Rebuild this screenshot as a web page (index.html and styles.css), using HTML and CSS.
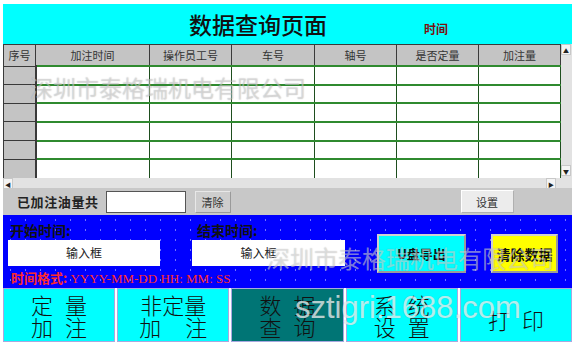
FILE: index.html
```html
<!DOCTYPE html>
<html lang="zh-CN">
<head>
    <meta charset="UTF-8">
    <meta name="viewport" content="width=device-width, initial-scale=1.0">
    <title>数据查询页面</title>
    <link rel="stylesheet" href="styles.css">
</head>
<body>

<div class="panel">
    <div class="header">
        <h1>数据查询页面</h1>
        <span class="clock">时间</span>
    </div>

    <div class="grid-area">
        <div class="grid-main">
            <table class="records">
                <colgroup>
                    <col style="width:32px"><col style="width:114px"><col style="width:82px">
                    <col style="width:83px"><col style="width:82px"><col style="width:82px"><col style="width:82px">
                </colgroup>
                <thead>
                    <tr>
                        <th>序号</th><th>加注时间</th><th>操作员工号</th><th>车号</th><th>轴号</th><th>是否定量</th><th>加注量</th>
                    </tr>
                </thead>
                <tbody>
                    <tr><td class="idx"></td><td></td><td></td><td></td><td></td><td></td><td></td></tr>
                    <tr><td class="idx"></td><td></td><td></td><td></td><td></td><td></td><td></td></tr>
                    <tr><td class="idx"></td><td></td><td></td><td></td><td></td><td></td><td></td></tr>
                    <tr><td class="idx"></td><td></td><td></td><td></td><td></td><td></td><td></td></tr>
                    <tr><td class="idx"></td><td></td><td></td><td></td><td></td><td></td><td></td></tr>
                    <tr><td class="idx"></td><td></td><td></td><td></td><td></td><td></td><td></td></tr>
                </tbody>
            </table>
            <div class="hscroll">
                <span class="arrow">&#9664;</span>
                <span class="arrow">&#9654;</span>
            </div>
        </div>
        <div class="vscroll">
            <span class="arrow">&#9650;</span>
            <span class="arrow">&#9660;</span>
        </div>
    </div>

    <div class="total-bar">
        <span class="total-label">已加注油量共</span>
        <input type="text" class="total-input">
        <button class="btn-gray">清除</button>
        <button class="btn-setup">设置</button>
    </div>

    <div class="query">
        <span class="q-label">开始时间:</span>
        <span class="q-label q-end">结束时间:</span>
        <div class="q-input q-start-box">输入框</div>
        <div class="q-input q-end-box">输入框</div>
        <div class="q-format"><b>时间格式:</b> YYYY-MM-DD HH: MM: SS</div>
        <button class="btn-usb">U盘导出</button>
        <button class="btn-clear">清除数据</button>
    </div>

    <div class="nav">
        <button class="nav-btn"><span>定量</span><span>加注</span></button>
        <button class="nav-btn"><span class="tight">非定量</span><span class="wide">加注</span></button>
        <button class="nav-btn active"><span>数据</span><span>查询</span></button>
        <button class="nav-btn"><span>系统</span><span>设置</span></button>
        <button class="nav-btn single"><span>打印</span></button>
    </div>

    <div class="mark mark-table">深圳市泰格瑞机电有限公司</div>
    <div class="mark mark-query">深圳市泰格瑞机电有限公司</div>
    <div class="mark mark-site">sztigri.1688.com</div>
</div>

</body>
</html>
```

FILE: styles.css
```css
body {
    margin: 0;
    background-color: #ffffff;
    font-family: "Noto Sans CJK SC", "Liberation Sans", sans-serif;
}

.panel {
    position: relative;
    width: 569px;
    margin: 4px 0 0 3px;
    overflow: hidden;
}

/* 标题栏 */
.header {
    height: 40px;
    background-color: #00ffff;
    display: flex;
    align-items: center;
}

.header h1 {
    margin: 0 0 0 186px;
    font-size: 23px;
    font-weight: 500;
    color: #111;
}

.clock {
    margin: 8px 0 0 97px;
    font-size: 12px;
    font-weight: bold;
    color: #7a1010;
}

/* 数据表 */
.grid-area {
    display: flex;
    height: 144px;
    background-color: #e2e2e2;
}

.grid-main {
    width: 557px;
    display: flex;
    flex-direction: column;
}

.records {
    border-collapse: collapse;
    table-layout: fixed;
    width: 557px;
    font-size: 11px;
}

.records th {
    height: 20px;
    padding: 0;
    background-color: #c4c4c4;
    border: 1px solid #3a3a3a;
    font-weight: normal;
    color: #333;
}

.records tbody tr {
    height: 18.67px;
}

.records td {
    padding: 0;
    background-color: #ffffff;
    border-top: 2px solid #2f8a2f;
    border-left: 1px solid #1e4e1e;
    border-right: 1px solid #1e4e1e;
}

.records td.idx {
    background-color: #c4c4c4;
    border-left: 1px solid #3a3a3a;
    border-right: 2px solid #3a3a3a;
    border-top: 1px solid #3a3a3a;
}

.hscroll {
    height: 12px;
    display: flex;
    justify-content: space-between;
    padding-right: 4px;
}

.arrow {
    width: 10px;
    height: 11px;
    background-color: #f4f4f4;
    border: 1px solid #c8c8c8;
    font-size: 6px;
    line-height: 11px;
    text-align: center;
    color: #222;
    box-sizing: border-box;
}

.vscroll {
    width: 12px;
    height: 132px;
    display: flex;
    flex-direction: column;
    justify-content: space-between;
    align-items: center;
}

/* 统计栏 */
.total-bar {
    height: 27px;
    background-color: #c8c8c8;
    display: flex;
    align-items: center;
}

.total-label {
    margin-left: 14px;
    font-size: 13px;
    font-weight: bold;
    color: #222;
    letter-spacing: 0.6px;
}

.total-input {
    margin-left: 7px;
    width: 80px;
    height: 22px;
    border: 1px solid #555;
    background-color: #ffffff;
    box-sizing: border-box;
}

.btn-gray {
    margin-left: 9px;
    width: 36px;
    height: 22px;
    padding: 0;
    font-family: inherit;
    font-size: 11px;
    color: #333;
    background-color: #cdcdcd;
    border: 1px solid #9a9a9a;
    border-top-color: #e8e8e8;
    border-left-color: #e8e8e8;
}

.btn-setup {
    margin-left: 230px;
    width: 53px;
    height: 23px;
    padding: 0;
    font-family: inherit;
    font-size: 11px;
    color: #333;
    background-color: #ececec;
    border: 1px solid #b0b0b0;
    border-top-color: #ffffff;
    border-left-color: #ffffff;
}

/* 查询区 */
.query {
    height: 73px;
    box-sizing: border-box;
    padding-left: 5px;
    background-color: #0000ff;
    background-image: radial-gradient(circle, rgba(190, 190, 255, 0.6) 0.7px, transparent 1.1px);
    background-size: 15px 10px;
    display: grid;
    grid-template-columns: 152px 32px 153px 32px 89px 25px 67px;
    grid-template-rows: 25px 26px 22px;
}

.q-label {
    grid-column: 1;
    grid-row: 1;
    align-self: center;
    padding: 4px 0 0 2px;
    font-size: 14px;
    font-weight: bold;
    color: #111;
}

.q-label.q-end {
    grid-column: 3;
    padding-left: 5px;
}

.q-input {
    grid-row: 2;
    background-color: #ffffff;
    font-size: 12px;
    line-height: 26px;
    text-align: center;
    color: #222;
}

.q-start-box {
    grid-column: 1;
}

.q-end-box {
    grid-column: 3;
    padding-right: 20px;
}

.q-format {
    grid-column: 1 / 5;
    grid-row: 3;
    align-self: center;
    padding-left: 3px;
    font-family: "Liberation Serif", "Noto Sans CJK SC", serif;
    font-size: 13px;
    color: #ff2a2a;
}

.q-format b {
    font-family: "Noto Sans CJK SC", sans-serif;
    font-size: 13px;
}

.btn-usb,
.btn-clear {
    grid-row: 1 / 4;
    align-self: start;
    margin-top: 19px;
    height: 39px;
    padding: 0;
    font-family: inherit;
    font-size: 13px;
    font-weight: bold;
    color: #111;
    border: 2px solid #9a9a9a;
    border-top-color: #d0d0d0;
    border-left-color: #d0d0d0;
}

.btn-usb {
    grid-column: 5;
    background-color: #00ffff;
}

.btn-clear {
    grid-column: 7;
    background-color: #ffff00;
    font-size: 14px;
}

/* 底部导航 */
.nav {
    height: 54px;
    display: flex;
    gap: 2px;
    background-color: #ffffff;
}

.nav-btn {
    flex: 1;
    padding: 4px 0 0;
    display: flex;
    flex-direction: column;
    align-items: center;
    justify-content: flex-start;
    font-family: inherit;
    font-size: 22px;
    font-weight: 300;
    line-height: 22px;
    color: #111;
    background-color: #00ffff;
    border: 1px solid #a8a8e0;
}

.nav-btn span {
    letter-spacing: 12px;
    margin-right: -12px;
}

.nav-btn span.tight {
    letter-spacing: 0;
    margin-right: 0;
}

.nav-btn span.wide {
    letter-spacing: 24px;
    margin-right: -24px;
}

.nav-btn.single {
    justify-content: center;
    padding: 8px 0 0;
}

.nav-btn.active {
    background-color: #007575;
}

/* 水印 */
.mark {
    position: absolute;
    white-space: nowrap;
    pointer-events: none;
}

.mark-table {
    left: 27px;
    top: 66px;
    font-size: 23px;
    color: rgba(255, 255, 255, 0.4);
    text-shadow: 0 0 1px rgba(90, 90, 90, 0.45);
}

.mark-query {
    left: 263px;
    top: 236px;
    font-size: 24px;
    color: rgba(255, 255, 255, 0.45);
    text-shadow: 0 0 1px rgba(60, 60, 60, 0.35);
}

.mark-site {
    left: 292px;
    top: 286px;
    font-family: "Liberation Sans", sans-serif;
    font-size: 31px;
    color: rgba(255, 255, 255, 0.7);
    text-shadow: 0 0 1px rgba(60, 60, 60, 0.3);
}
```
